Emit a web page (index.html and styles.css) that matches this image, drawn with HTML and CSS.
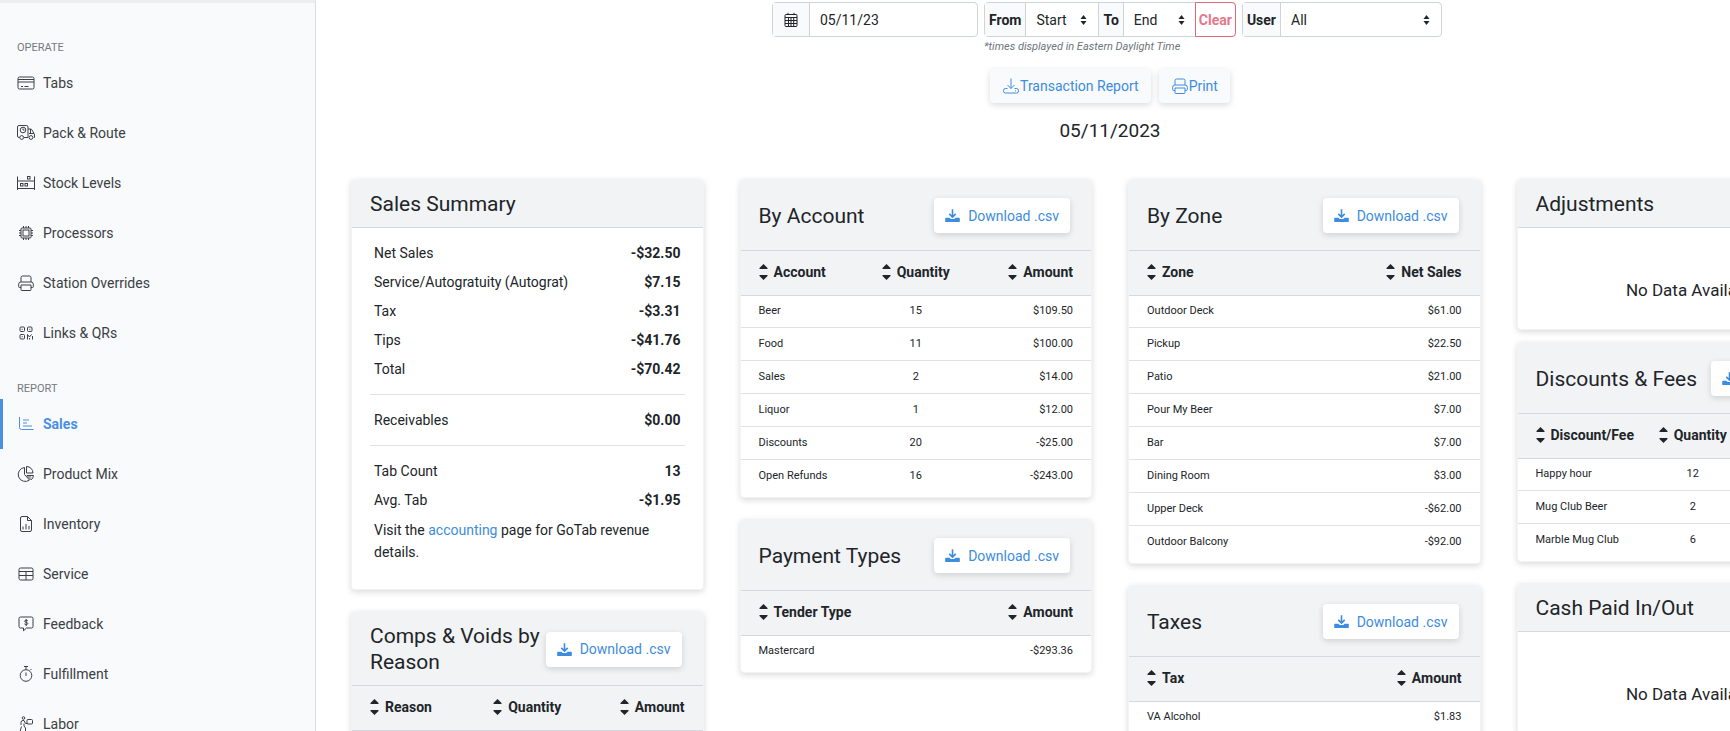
FILE: index.html
```
<!DOCTYPE html>
<html lang="en">
<head>
<meta charset="utf-8">
<title>Sales</title>
<link rel="stylesheet" href="styles.css">
</head>
<body>
<svg class="sprite" aria-hidden="true">
  <symbol id="i-download" viewBox="0 0 16 16"><path d="M8 1.2v8M4.6 6.2 8 9.6l3.400-3.400" fill="none" stroke="currentColor" stroke-width="1.700"/><path d="M1 10.300h3.600l1.500 1.500h3.800l1.500-1.500H15a.8.8 0 0 1 .8.8v2.900a.9.9 0 0 1-.9.9H1.100a.9.9 0 0 1-.9-.9v-2.900a.8.8 0 0 1 .8-.8z" fill="currentColor"/></symbol>
  <symbol id="i-sort" viewBox="0 0 9 16"><path d="M4.500 0 8.500 4v1h-8V4zM4.500 16l4-4v-1h-8v1z" fill="currentColor"/></symbol>
  <symbol id="i-caret" viewBox="0 0 7 10"><path d="M3.500 0 6.500 4h-6zM3.500 10l3-4h-6z" fill="currentColor"/></symbol>
  <symbol id="i-print" viewBox="0 0 18 18"><path d="M4 8V3.500A1.500 1.500 0 0 1 5.500 2h7A1.500 1.500 0 0 1 14 3.500V8M4 13.500H2.500A.8.8 0 0 1 1.700 12.700V10.200A2.200 2.200 0 0 1 3.900 8h10.200a2.200 2.200 0 0 1 2.200 2.200v2.500a.8.8 0 0 1-.8.8H14M4 11h10v4.700a.8.8 0 0 1-.8.8H4.800a.8.8 0 0 1-.8-.8z"/></symbol>
</svg>
<div class="app">
  <nav class="sidebar" aria-label="Main">
    <h2 class="nav-label">Operate</h2>
    <ul class="nav-list">
      <li><a class="nav-link" href="#tabs"><svg class="nav-icon" viewBox="0 0 18 18"><rect x="1" y="3" width="16" height="12" rx="1.500"/><path d="M1 5.500h16M1 8h16M4 12.500h2M7.500 12.500h4"/></svg>Tabs</a></li>
      <li><a class="nav-link" href="#pack"><svg class="nav-icon" viewBox="0 0 18 18"><path d="M2.500 13.500H2A1.500 1.500 0 0 1 .5 12V3A1.500 1.500 0 0 1 2 1.500h7.500A1.500 1.500 0 0 1 11 3v10.500H7M11 5h2.500q1 0 1.500 1l2 3.500q.5.500.5 1.500v2.500h-.8M12 9.500h5M13.500 5v4.500"/><circle cx="6" cy="6" r="2.800"/><path d="M6 4.500V6h1.500"/><circle cx="4.700" cy="13.500" r="1.900"/><circle cx="14" cy="13.500" r="1.900"/></svg>Pack &amp; Route</a></li>
      <li><a class="nav-link" href="#stock"><svg class="nav-icon" viewBox="0 0 18 18"><path d="M.5 2.500v13.500M17.500 2.500v13.500M.5 7h17M.5 14.500h17"/><rect x="3.500" y="9.500" width="2.500" height="2.500"/><rect x="8" y="9.500" width="2.500" height="2.500"/><rect x="10.500" y="2.500" width="2.500" height="2.500"/></svg>Stock Levels</a></li>
      <li><a class="nav-link" href="#processors"><svg class="nav-icon" viewBox="0 0 18 18"><rect x="4" y="4" width="10" height="10" rx="1"/><rect x="6" y="6" width="6" height="6"/><path d="M6.500 2v2M9 2v2M11.500 2v2M6.500 14v2M9 14v2M11.500 14v2M2 6.500h2M2 9h2M2 11.500h2M14 6.500h2M14 9h2M14 11.500h2"/></svg>Processors</a></li>
      <li><a class="nav-link" href="#stations"><svg class="nav-icon"><use href="#i-print"/></svg>Station Overrides</a></li>
      <li><a class="nav-link" href="#links"><svg class="nav-icon" viewBox="0 0 18 18"><rect x="3" y="3" width="4.500" height="4.500" rx="1"/><rect x="10.500" y="3" width="4.500" height="4.500" rx="1"/><rect x="3" y="10.500" width="4.500" height="4.500" rx="1"/><path d="M5.200 4.800v1M12.800 4.800v1M5.200 12.200v1M10.500 15.500v-5l2 2.500 2-2.500M15.500 12v3.500M12.500 14v1.500"/></svg>Links &amp; QRs</a></li>
    </ul>
    <h2 class="nav-label">Report</h2>
    <ul class="nav-list">
      <li><a class="nav-link active" href="#sales" aria-current="page"><svg class="nav-icon" viewBox="0 0 18 18"><path d="M2.500 2v10.500a2 2 0 0 0 2 2H16.500M6 5h6M6 8h4M6 11h9"/></svg>Sales</a></li>
      <li><a class="nav-link" href="#mix"><svg class="nav-icon" viewBox="0 0 18 18"><path d="M7.500 2.500A7 7 0 1 0 12.500 15L7.500 9.500zM9.500 1.500v6.500H16A6.500 6.500 0 0 0 9.500 1.500zM10 10.500h6.500a6.500 6.500 0 0 1-2.300 4.300zM12 10.500l2 2"/></svg>Product Mix</a></li>
      <li><a class="nav-link" href="#inventory"><svg class="nav-icon" viewBox="0 0 18 18"><path d="M3.500 3A1.500 1.500 0 0 1 5 1.500h5.500l4 4V15a1.500 1.500 0 0 1-1.500 1.500H5A1.500 1.500 0 0 1 3.500 15zM10.500 1.500V5.500h4M6 11.500v3M9 9v5.500M12 11v3.500"/></svg>Inventory</a></li>
      <li><a class="nav-link" href="#service"><svg class="nav-icon" viewBox="0 0 18 18"><rect x="2" y="3" width="14" height="12" rx="1.500"/><path d="M2 6.500h14M2 10.500h14M9 6.500v8.500"/></svg>Service</a></li>
      <li><a class="nav-link" href="#feedback"><svg class="nav-icon" viewBox="0 0 18 18"><path d="M3.500 2h11A1.500 1.500 0 0 1 16 3.500v8a1.500 1.500 0 0 1-1.500 1.500H9.500l-3 2.800V13h-3A1.500 1.500 0 0 1 2 11.500v-8A1.500 1.500 0 0 1 3.500 2zM10.800 5.800C10 4.900 7.600 5 7.600 6.200c0 1.400 3.200.9 3.200 2.300 0 1.300-2.500 1.300-3.400.4M9.200 4v7"/></svg>Feedback</a></li>
      <li><a class="nav-link" href="#fulfillment"><svg class="nav-icon" viewBox="0 0 18 18"><circle cx="9" cy="10.500" r="5.800"/><path d="M7 1.500h4M9 1.500v3M9 7.500v3.500M13.500 5l1-1"/></svg>Fulfillment</a></li>
      <li><a class="nav-link" href="#labor"><svg class="nav-icon" viewBox="0 0 18 18"><circle cx="6.500" cy="3" r="1.300"/><path d="M4 10V7.500A2 2 0 0 1 6 5.500h1l1.500 3h2M7 8.500V11l1.500 2v3.500M4.500 11.500 3 16.500"/><rect x="10" y="4.500" width="5.500" height="4.500" rx="1"/></svg>Labor</a></li>
    </ul>
  </nav>

  <main class="content">
    <form class="filters">
      <div class="group date-group">
        <label class="addon" for="date" aria-label="Date"><svg class="cal-icon" viewBox="0 0 16 16"><rect x="2" y="2.500" width="12" height="12" rx="1"/><path d="M2 5.500h12M2 8.500h12M2 11.500h12M5.500 5.500v9M8 5.500v9M10.700 5.500v9M5 .8v1.700M11 .8v1.700"/></svg></label>
        <input class="field" id="date" type="text" value="05/11/23">
      </div>
      <div class="times">
        <div class="group">
          <label class="addon strong" for="from">From</label>
          <div class="select time"><select class="field" id="from"><option>Start</option></select><svg class="caret"><use href="#i-caret"/></svg></div>
          <label class="addon strong" for="to">To</label>
          <div class="select time"><select class="field" id="to"><option>End</option></select><svg class="caret"><use href="#i-caret"/></svg></div>
          <button class="clear" type="button">Clear</button>
        </div>
        <p class="note">*times displayed in Eastern Daylight Time</p>
      </div>
      <div class="group">
        <label class="addon strong" for="user">User</label>
        <div class="select user"><select class="field" id="user"><option>All</option></select><svg class="caret"><use href="#i-caret"/></svg></div>
      </div>
    </form>
    <div class="actions">
      <button class="action" type="button"><svg class="action-icon" viewBox="0 0 18 18"><path d="M9 1.500v10M5.500 8 9 11.500 12.500 8M5.500 11.500H3.500a2 2 0 0 0-2 2V14a2 2 0 0 0 2 2h11a2 2 0 0 0 2-2v-.5a2 2 0 0 0-2-2h-2M13 13.800h1"/></svg>Transaction Report</button>
      <button class="action" type="button"><svg class="action-icon"><use href="#i-print"/></svg>Print</button>
    </div>
    <h1 class="page-title">05/11/2023</h1>

    <div class="columns">
      <div class="column">
        <section class="card">
          <header class="card-head"><h2>Sales Summary</h2></header>
          <div class="summary">
            <dl class="lines">
              <div><dt>Net Sales</dt><dd>-$32.50</dd></div>
              <div><dt>Service/Autogratuity (Autograt)</dt><dd>$7.15</dd></div>
              <div><dt>Tax</dt><dd>-$3.31</dd></div>
              <div><dt>Tips</dt><dd>-$41.76</dd></div>
              <div><dt>Total</dt><dd>-$70.42</dd></div>
            </dl>
            <dl class="lines">
              <div><dt>Receivables</dt><dd>$0.00</dd></div>
            </dl>
            <dl class="lines">
              <div><dt>Tab Count</dt><dd>13</dd></div>
              <div><dt>Avg. Tab</dt><dd>-$1.95</dd></div>
            </dl>
            <p class="visit">Visit the <a href="#accounting">accounting</a> page for GoTab revenue details.</p>
          </div>
        </section>
        <section class="card">
          <header class="card-head tall"><h2>Comps &amp; Voids by Reason</h2><button class="csv" type="button"><svg class="csv-icon"><use href="#i-download"/></svg>Download .csv</button></header>
          <table>
            <thead><tr><th><button class="sort" type="button"><svg class="sort-icon"><use href="#i-sort"/></svg>Reason</button></th><th><button class="sort" type="button"><svg class="sort-icon"><use href="#i-sort"/></svg>Quantity</button></th><th><button class="sort" type="button"><svg class="sort-icon"><use href="#i-sort"/></svg>Amount</button></th></tr></thead>
          </table>
        </section>
      </div>

      <div class="column">
        <section class="card">
          <header class="card-head tall"><h2>By Account</h2><button class="csv" type="button"><svg class="csv-icon"><use href="#i-download"/></svg>Download .csv</button></header>
          <table>
            <thead><tr><th><button class="sort" type="button"><svg class="sort-icon"><use href="#i-sort"/></svg>Account</button></th><th><button class="sort" type="button"><svg class="sort-icon"><use href="#i-sort"/></svg>Quantity</button></th><th><button class="sort" type="button"><svg class="sort-icon"><use href="#i-sort"/></svg>Amount</button></th></tr></thead>
            <tbody>
              <tr><td>Beer</td><td>15</td><td>$109.50</td></tr>
              <tr><td>Food</td><td>11</td><td>$100.00</td></tr>
              <tr><td>Sales</td><td>2</td><td>$14.00</td></tr>
              <tr><td>Liquor</td><td>1</td><td>$12.00</td></tr>
              <tr><td>Discounts</td><td>20</td><td>-$25.00</td></tr>
              <tr><td>Open Refunds</td><td>16</td><td>-$243.00</td></tr>
            </tbody>
          </table>
        </section>
        <section class="card">
          <header class="card-head tall"><h2>Payment Types</h2><button class="csv" type="button"><svg class="csv-icon"><use href="#i-download"/></svg>Download .csv</button></header>
          <table>
            <thead><tr><th><button class="sort" type="button"><svg class="sort-icon"><use href="#i-sort"/></svg>Tender Type</button></th><th><button class="sort" type="button"><svg class="sort-icon"><use href="#i-sort"/></svg>Amount</button></th></tr></thead>
            <tbody><tr><td>Mastercard</td><td>-$293.36</td></tr></tbody>
          </table>
        </section>
      </div>

      <div class="column">
        <section class="card">
          <header class="card-head tall"><h2>By Zone</h2><button class="csv" type="button"><svg class="csv-icon"><use href="#i-download"/></svg>Download .csv</button></header>
          <table>
            <thead><tr><th><button class="sort" type="button"><svg class="sort-icon"><use href="#i-sort"/></svg>Zone</button></th><th><button class="sort" type="button"><svg class="sort-icon"><use href="#i-sort"/></svg>Net Sales</button></th></tr></thead>
            <tbody>
              <tr><td>Outdoor Deck</td><td>$61.00</td></tr>
              <tr><td>Pickup</td><td>$22.50</td></tr>
              <tr><td>Patio</td><td>$21.00</td></tr>
              <tr><td>Pour My Beer</td><td>$7.00</td></tr>
              <tr><td>Bar</td><td>$7.00</td></tr>
              <tr><td>Dining Room</td><td>$3.00</td></tr>
              <tr><td>Upper Deck</td><td>-$62.00</td></tr>
              <tr><td>Outdoor Balcony</td><td>-$92.00</td></tr>
            </tbody>
          </table>
        </section>
        <section class="card">
          <header class="card-head tall"><h2>Taxes</h2><button class="csv" type="button"><svg class="csv-icon"><use href="#i-download"/></svg>Download .csv</button></header>
          <table>
            <thead><tr><th><button class="sort" type="button"><svg class="sort-icon"><use href="#i-sort"/></svg>Tax</button></th><th><button class="sort" type="button"><svg class="sort-icon"><use href="#i-sort"/></svg>Amount</button></th></tr></thead>
            <tbody><tr><td>VA Alcohol</td><td>$1.83</td></tr></tbody>
          </table>
        </section>
      </div>

      <div class="column">
        <section class="card close">
          <header class="card-head"><h2>Adjustments</h2></header>
          <p class="empty">No Data Available</p>
        </section>
        <section class="card">
          <header class="card-head tall"><h2>Discounts &amp; Fees</h2><button class="csv" type="button"><svg class="csv-icon"><use href="#i-download"/></svg>Download .csv</button></header>
          <table>
            <thead><tr><th><button class="sort" type="button"><svg class="sort-icon"><use href="#i-sort"/></svg>Discount/Fee</button></th><th><button class="sort" type="button"><svg class="sort-icon"><use href="#i-sort"/></svg>Quantity</button></th><th></th></tr></thead>
            <tbody>
              <tr><td>Happy hour</td><td>12</td><td></td></tr>
              <tr><td>Mug Club Beer</td><td>2</td><td></td></tr>
              <tr><td>Marble Mug Club</td><td>6</td><td></td></tr>
            </tbody>
          </table>
        </section>
        <section class="card">
          <header class="card-head"><h2>Cash Paid In/Out</h2></header>
          <p class="empty">No Data Available</p>
        </section>
      </div>
    </div>
  </main>
</div>
</body>
</html>
```
FILE: styles.css
```
* {
  box-sizing: border-box;
}

html {
  height: 100%;
  overflow: hidden;
}

body {
  height: 100%;
  margin: 0;
  overflow: hidden;
  background: #fff;
  color: #212529;
  font-family: Roboto, "Liberation Sans", sans-serif;
  font-size: 14px;
  line-height: 20px;
}

h1, h2, p, ul, dl, dd {
  margin: 0;
  padding: 0;
  font-weight: 400;
}

button, input, select {
  font: inherit;
  color: inherit;
  margin: 0;
}

button {
  cursor: pointer;
}

.sprite {
  display: none;
}

.app {
  display: flex;
  height: 100%;
}

/* Sidebar */
.sidebar {
  flex: 0 0 316px;
  padding-top: 15px;
  overflow: hidden;
  border-top: 3px solid #eceef0;
  border-right: 1px solid #dadcdf;
  background: #f8fafc;
}

.nav-label {
  padding: 22px 0 2px 17px;
  color: #75797e;
  font-size: 11px;
  line-height: 16px;
  text-transform: uppercase;
}

.nav-list {
  padding-bottom: 1px;
  list-style: none;
}

.nav-link {
  display: flex;
  align-items: center;
  gap: 8px;
  height: 50px;
  padding-left: 14px;
  border-left: 3px solid transparent;
  color: #3c4044;
  text-decoration: none;
}

.nav-link.active {
  border-left-color: #4a90e2;
  color: #4a90e2;
  font-weight: 700;
}

.nav-icon {
  width: 18px;
  height: 18px;
  fill: none;
  stroke: currentColor;
}

/* The report grid keeps its four columns and is clipped in narrow windows */
.content {
  flex: 1 0 0;
  min-width: 1588px;
}

/* Filters */
.filters {
  display: flex;
  align-items: flex-start;
  justify-content: center;
  gap: 6px;
  padding: 2px 6px 0 0;
}

.group {
  display: flex;
  height: 35px;
  border: 1px solid #ced4da;
  border-radius: 4px;
  background: #fff;
}

.date-group {
  width: 206px;
}

.addon {
  display: flex;
  align-items: center;
  justify-content: center;
  padding: 0 4px;
  border-right: 1px solid #ced4da;
  background: #f8fafc;
}

.date-group .addon {
  padding: 0 10px;
}

.strong {
  font-weight: 700;
}

.select + .addon {
  border-left: 1px solid #ced4da;
}

.cal-icon {
  width: 16px;
  height: 16px;
  fill: none;
  stroke: currentColor;
}

.field {
  width: 100%;
  height: 100%;
  min-width: 0;
  padding: 0 10px;
  border: 0;
  background: transparent;
  appearance: none;
}

.select {
  display: grid;
  align-items: center;
}

.select > * {
  grid-area: 1 / 1;
}

.time {
  width: 72px;
}

.user {
  width: 160px;
}

.caret {
  justify-self: end;
  width: 7px;
  height: 10px;
  margin-right: 11px;
  pointer-events: none;
}

.clear {
  margin: -1px;
  padding: 0 3px;
  border: 1px solid #dc6a7a;
  border-radius: 0 4px 4px 0;
  background: #fff;
  color: #e4788a;
  font-weight: 700;
}

.note {
  color: #6c757d;
  font-size: 11px;
  font-style: italic;
}

.actions {
  display: flex;
  justify-content: center;
  gap: 8px;
  padding-top: 12px;
}

.action {
  display: flex;
  align-items: center;
  height: 34px;
  padding: 0 12px;
  border: 0;
  border-radius: 4px;
  background: #f8fafc;
  box-shadow: 0 2px 6px rgba(0, 0, 0, 0.15);
  color: #3d8ce0;
}

.action-icon {
  width: 18px;
  height: 18px;
  fill: none;
  stroke: currentColor;
}

.page-title {
  padding: 13px 0 34px;
  font-size: 19px;
  line-height: 29px;
  text-align: center;
}

/* Cards */
.columns {
  display: grid;
  grid-template-columns: repeat(4, minmax(0, 1fr));
  align-items: start;
  gap: 36px;
  padding: 0 35px;
}

.card {
  margin-bottom: 21px;
  overflow: hidden;
  border: 1px solid #f1f3f5;
  border-radius: 4px;
  background: #fff;
  box-shadow: 0 2px 6px rgba(0, 0, 0, 0.15);
}

.card.close {
  margin-bottom: 12px;
}

.card-head {
  display: flex;
  align-items: center;
  justify-content: space-between;
  min-height: 48px;
  padding: 0 21px 0 18px;
  border-bottom: 1px solid #d5d9dd;
  background: #f1f3f5;
}

.card-head.tall {
  min-height: 71px;
  padding-top: 11px;
  padding-bottom: 10px;
}

.card-head h2 {
  font-size: 21px;
  line-height: 26px;
}

.csv {
  display: flex;
  flex: none;
  align-items: center;
  gap: 8px;
  height: 35px;
  padding: 0 11px;
  border: 0;
  border-radius: 4px;
  background: #fff;
  box-shadow: 0 2px 6px rgba(0, 0, 0, 0.15);
  color: #3d8ce0;
}

.csv-icon {
  width: 15px;
  height: 15px;
}

.summary {
  padding: 11px 18px 26px;
}

.lines {
  padding: 0 4px;
}

.lines + .lines {
  margin-top: 10px;
  padding-top: 11px;
  border-top: 1px solid #dee2e6;
}

.lines > div {
  display: flex;
  justify-content: space-between;
  line-height: 29px;
}

.lines dd {
  font-weight: 700;
}

.visit {
  padding: 4px 4px 0;
  line-height: 22px;
}

.visit a {
  color: #3d8ce0;
  text-decoration: none;
}

/* Tables */
table {
  width: 100%;
  margin-bottom: 5px;
  border-collapse: collapse;
  table-layout: fixed;
}

th {
  height: 44px;
  padding: 2px 0 0;
  border-bottom: 1px solid #d5d9dd;
  background: #f1f3f5;
  text-align: center;
}

td {
  height: 33px;
  padding: 0;
  font-size: 11px;
  text-align: center;
}

tbody tr:first-child td {
  height: 32px;
}

tr + tr td {
  border-top: 1px solid #dee2e6;
}

th:first-child, td:first-child {
  padding-left: 18px;
  text-align: left;
}

th:last-child, td:last-child {
  padding-right: 18px;
  text-align: right;
}

.sort {
  display: inline-flex;
  align-items: center;
  gap: 6px;
  padding: 0;
  border: 0;
  background: transparent;
  font-weight: 700;
  white-space: nowrap;
}

.sort-icon {
  width: 9px;
  height: 16px;
}

.empty {
  padding: 50px 0 27px;
  font-size: 17px;
  line-height: 24px;
  text-align: center;
}
```
